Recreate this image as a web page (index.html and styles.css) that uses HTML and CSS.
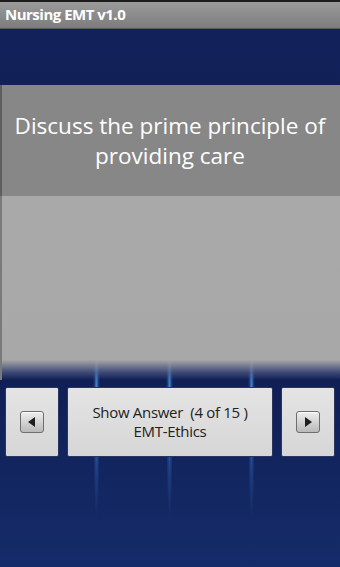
FILE: index.html
```html
<!DOCTYPE html>
<html>
<head>
<meta charset="utf-8">
<link rel="stylesheet" href="styles.css">
</head>
<body>
<div class="app">
  <div class="titlebar">Nursing EMT v1.0</div>
  <div class="screen">
    <div class="band"></div>
    <div class="question">Discuss the prime principle of providing care</div>
    <div class="answer"></div>
    <div class="controls">
      <div class="btn side">
        <span class="arrow-box">
          <svg width="10" height="10" viewBox="0 0 10 10"><polygon points="8,0 8,10 1,5" fill="#1e1e1e"/></svg>
        </span>
      </div>
      <div class="btn main">
        <span class="line">Show Answer&nbsp; (4 of 15 )</span>
        <span class="line">EMT-Ethics</span>
      </div>
      <div class="btn side">
        <span class="arrow-box">
          <svg width="10" height="10" viewBox="0 0 10 10"><polygon points="2,0 2,10 9,5" fill="#1e1e1e"/></svg>
        </span>
      </div>
    </div>
  </div>
</div>
</body>
</html>
```
FILE: styles.css
```css
html, body {
  margin: 0;
  padding: 0;
}
body {
  width: 340px;
  height: 567px;
  overflow: hidden;
  font-family: "Open Sans", "Noto Sans", "DejaVu Sans", sans-serif;
}
.app {
  width: 340px;
  height: 567px;
  display: flex;
  flex-direction: column;
}
.titlebar {
  box-sizing: border-box;
  height: 29px;
  border-top: 2px solid #1c1c1c;
  border-bottom: 1px solid #5a5a5a;
  background: linear-gradient(#9b9b9b, #7c7c7c);
  color: #fff;
  font-weight: bold;
  font-size: 15px;
  line-height: 25px;
  padding-left: 5px;
  letter-spacing: -0.5px;
}
.screen {
  flex: 1;
  display: flex;
  flex-direction: column;
  background-color: #13225e;
  background-image:
    radial-gradient(closest-side, rgba(90,175,245,0.85), rgba(60,130,225,0.3) 55%, rgba(40,90,200,0) 100%),
    radial-gradient(closest-side, rgba(90,175,245,0.85), rgba(60,130,225,0.3) 55%, rgba(40,90,200,0) 100%),
    radial-gradient(closest-side, rgba(90,175,245,0.85), rgba(60,130,225,0.3) 55%, rgba(40,90,200,0) 100%),
    linear-gradient(to bottom, #13215a 0%, #0f1d52 60%, #152c6a 100%);
  background-size: 7px 230px, 7px 230px, 7px 230px, 100% 100%;
  background-position: 93px 260px, 166px 260px, 248px 260px, 0 0;
  background-repeat: no-repeat;
}
.band {
  height: 56px;
}
.question {
  height: 111px;
  background: #878787;
  color: #fff;
  font-size: 22.5px;
  line-height: 30px;
  text-align: center;
  display: flex;
  align-items: center;
  justify-content: center;
  padding: 0 6px;
  box-sizing: border-box;
  box-shadow: inset 2px 0 0 #5e5e5e;
}
.answer {
  height: 184px;
  background: linear-gradient(to bottom, #a9a9a9 0%, #a8a8a8 89%, rgba(90,100,140,0.6) 96%, rgba(20,35,95,0) 100%);
  box-shadow: inset 2px 0 0 #7a7a7a;
}
.controls {
  display: flex;
  gap: 8px;
  padding: 7px 5px 0 5px;
  height: 70px;
}
.btn {
  height: 70px;
  box-sizing: border-box;
  background: linear-gradient(#e4e4e4, #d6d6d6);
  border: 1px solid #2b3560;
  border-radius: 2px;
  display: flex;
  align-items: center;
  justify-content: center;
}
.btn.side {
  width: 54px;
}
.btn.main {
  flex: 1;
  flex-direction: column;
  color: #222;
  font-size: 15px;
  letter-spacing: -0.3px;
  line-height: 20px;
}
.line {
  display: block;
  height: 19px;
  line-height: 19px;
}
.arrow-box {
  width: 24px;
  height: 22px;
  box-sizing: border-box;
  border: 1px solid #6e6e6e;
  border-radius: 3px;
  background: linear-gradient(#eeeeee, #b9b9b9);
  box-shadow: inset 0 1px 0 #fafafa;
  display: flex;
  align-items: center;
  justify-content: center;
}
```
